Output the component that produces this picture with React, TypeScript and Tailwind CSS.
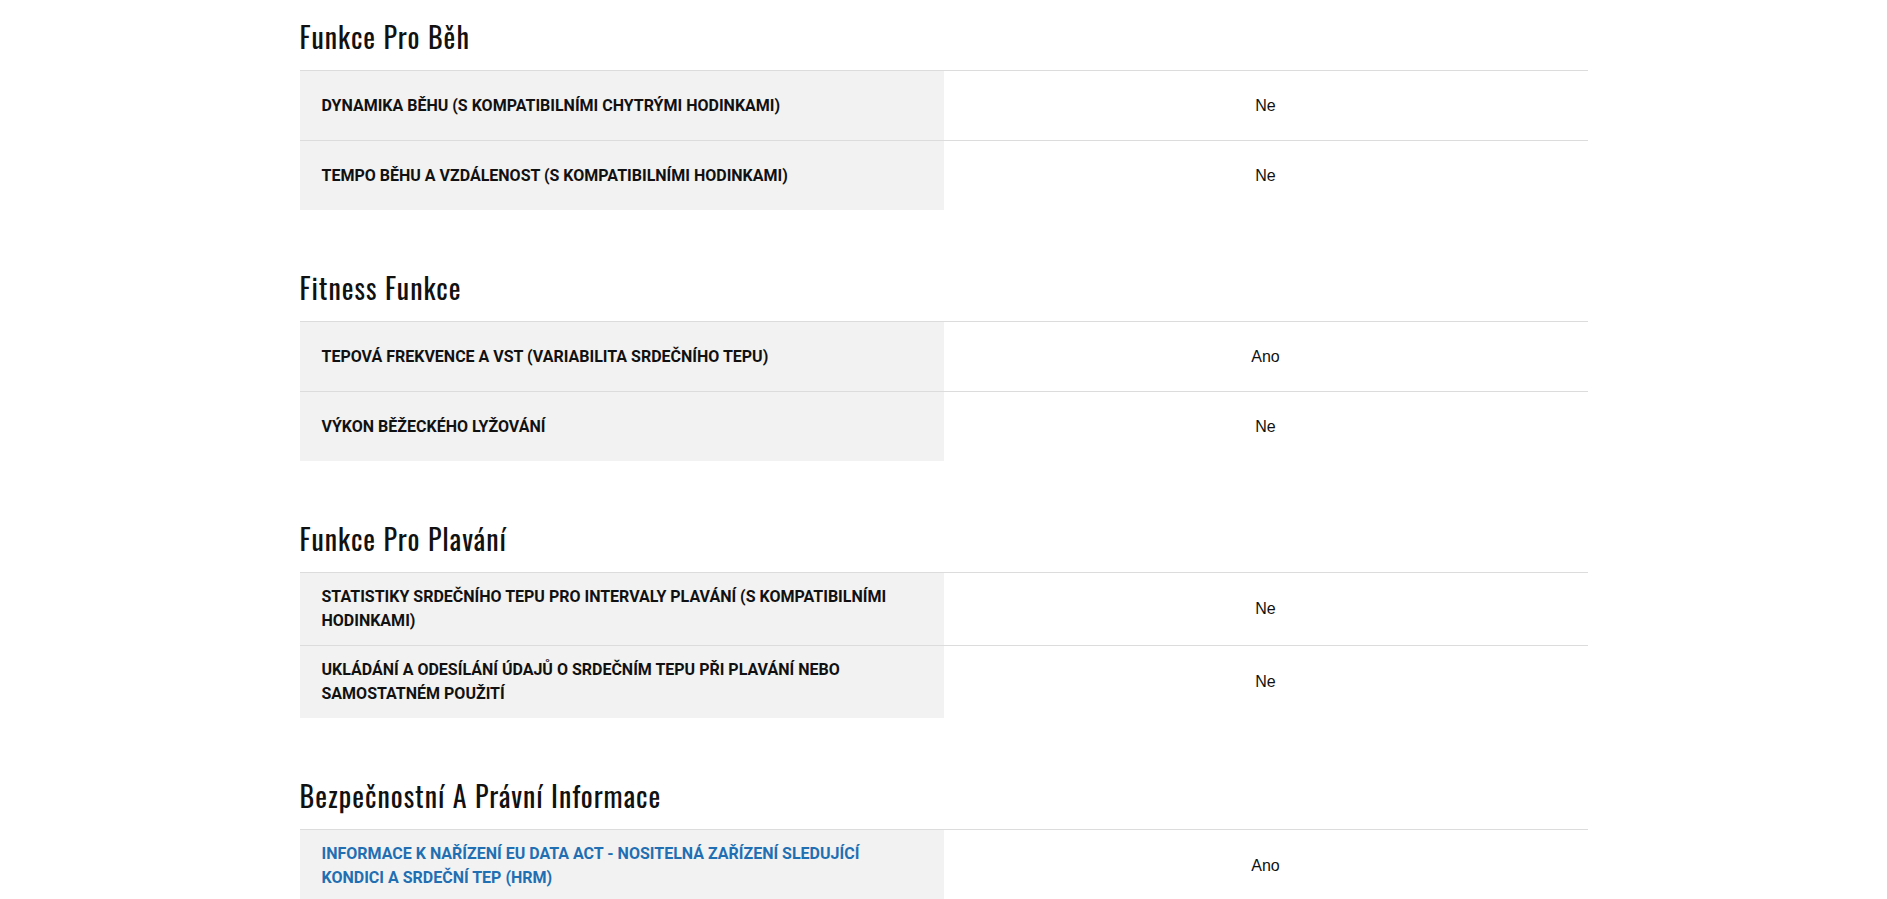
const sections: { title: string; rows: { label: string; value: string; link?: boolean }[] }[] = [
    {
        title: "Funkce Pro Běh",
        rows: [
            { label: "DYNAMIKA BĚHU (S KOMPATIBILNÍMI CHYTRÝMI HODINKAMI)", value: "Ne" },
            { label: "TEMPO BĚHU A VZDÁLENOST (S KOMPATIBILNÍMI HODINKAMI)", value: "Ne" },
        ],
    },
    {
        title: "Fitness Funkce",
        rows: [
            { label: "TEPOVÁ FREKVENCE A VST (VARIABILITA SRDEČNÍHO TEPU)", value: "Ano" },
            { label: "VÝKON BĚŽECKÉHO LYŽOVÁNÍ", value: "Ne" },
        ],
    },
    {
        title: "Funkce Pro Plavání",
        rows: [
            { label: "STATISTIKY SRDEČNÍHO TEPU PRO INTERVALY PLAVÁNÍ (S KOMPATIBILNÍMI HODINKAMI)", value: "Ne" },
            { label: "UKLÁDÁNÍ A ODESÍLÁNÍ ÚDAJŮ O SRDEČNÍM TEPU PŘI PLAVÁNÍ NEBO SAMOSTATNÉM POUŽITÍ", value: "Ne" },
        ],
    },
    {
        title: "Bezpečnostní A Právní Informace",
        rows: [
            {
                label: "INFORMACE K NAŘÍZENÍ EU DATA ACT - NOSITELNÁ ZAŘÍZENÍ SLEDUJÍCÍ KONDICI A SRDEČNÍ TEP (HRM)",
                value: "Ano",
                link: true,
            },
        ],
    },
]

export default function App() {
    return (
        <div className="w-full bg-white pt-[17px]">
            <div className="mx-auto w-[1288px] flex flex-col gap-[58px]">
                {sections.map((s) => (
                    <section key={s.title}>
                        <h2 className="h-[40px] mb-[13px] flex items-center text-[28px] leading-[40px] tracking-[1px] text-[#111] font-['Oswald','DejaVu_Sans_Condensed',sans-serif]">
                            {s.title}
                        </h2>
                        <div>
                            {s.rows.map((r) => (
                                <div key={r.label} className="grid grid-cols-2 border-t border-[#dcdcdc] min-h-[70px]">
                                    <div className="bg-[#f2f2f2] flex items-center pl-[22px] pr-[40px] py-3">
                                        <span
                                            className={`font-['Roboto',sans-serif] font-bold text-[16px] leading-[24px] ${r.link ? "text-[#1f6fb2]" : "text-[#111]"}`}
                                        >
                                            {r.label}
                                        </span>
                                    </div>
                                    <div className="flex items-center justify-center font-['Liberation_Sans',Arial,sans-serif] text-[16px] text-[#111]">
                                        {r.value}
                                    </div>
                                </div>
                            ))}
                        </div>
                    </section>
                ))}
            </div>
        </div>
    )
}
